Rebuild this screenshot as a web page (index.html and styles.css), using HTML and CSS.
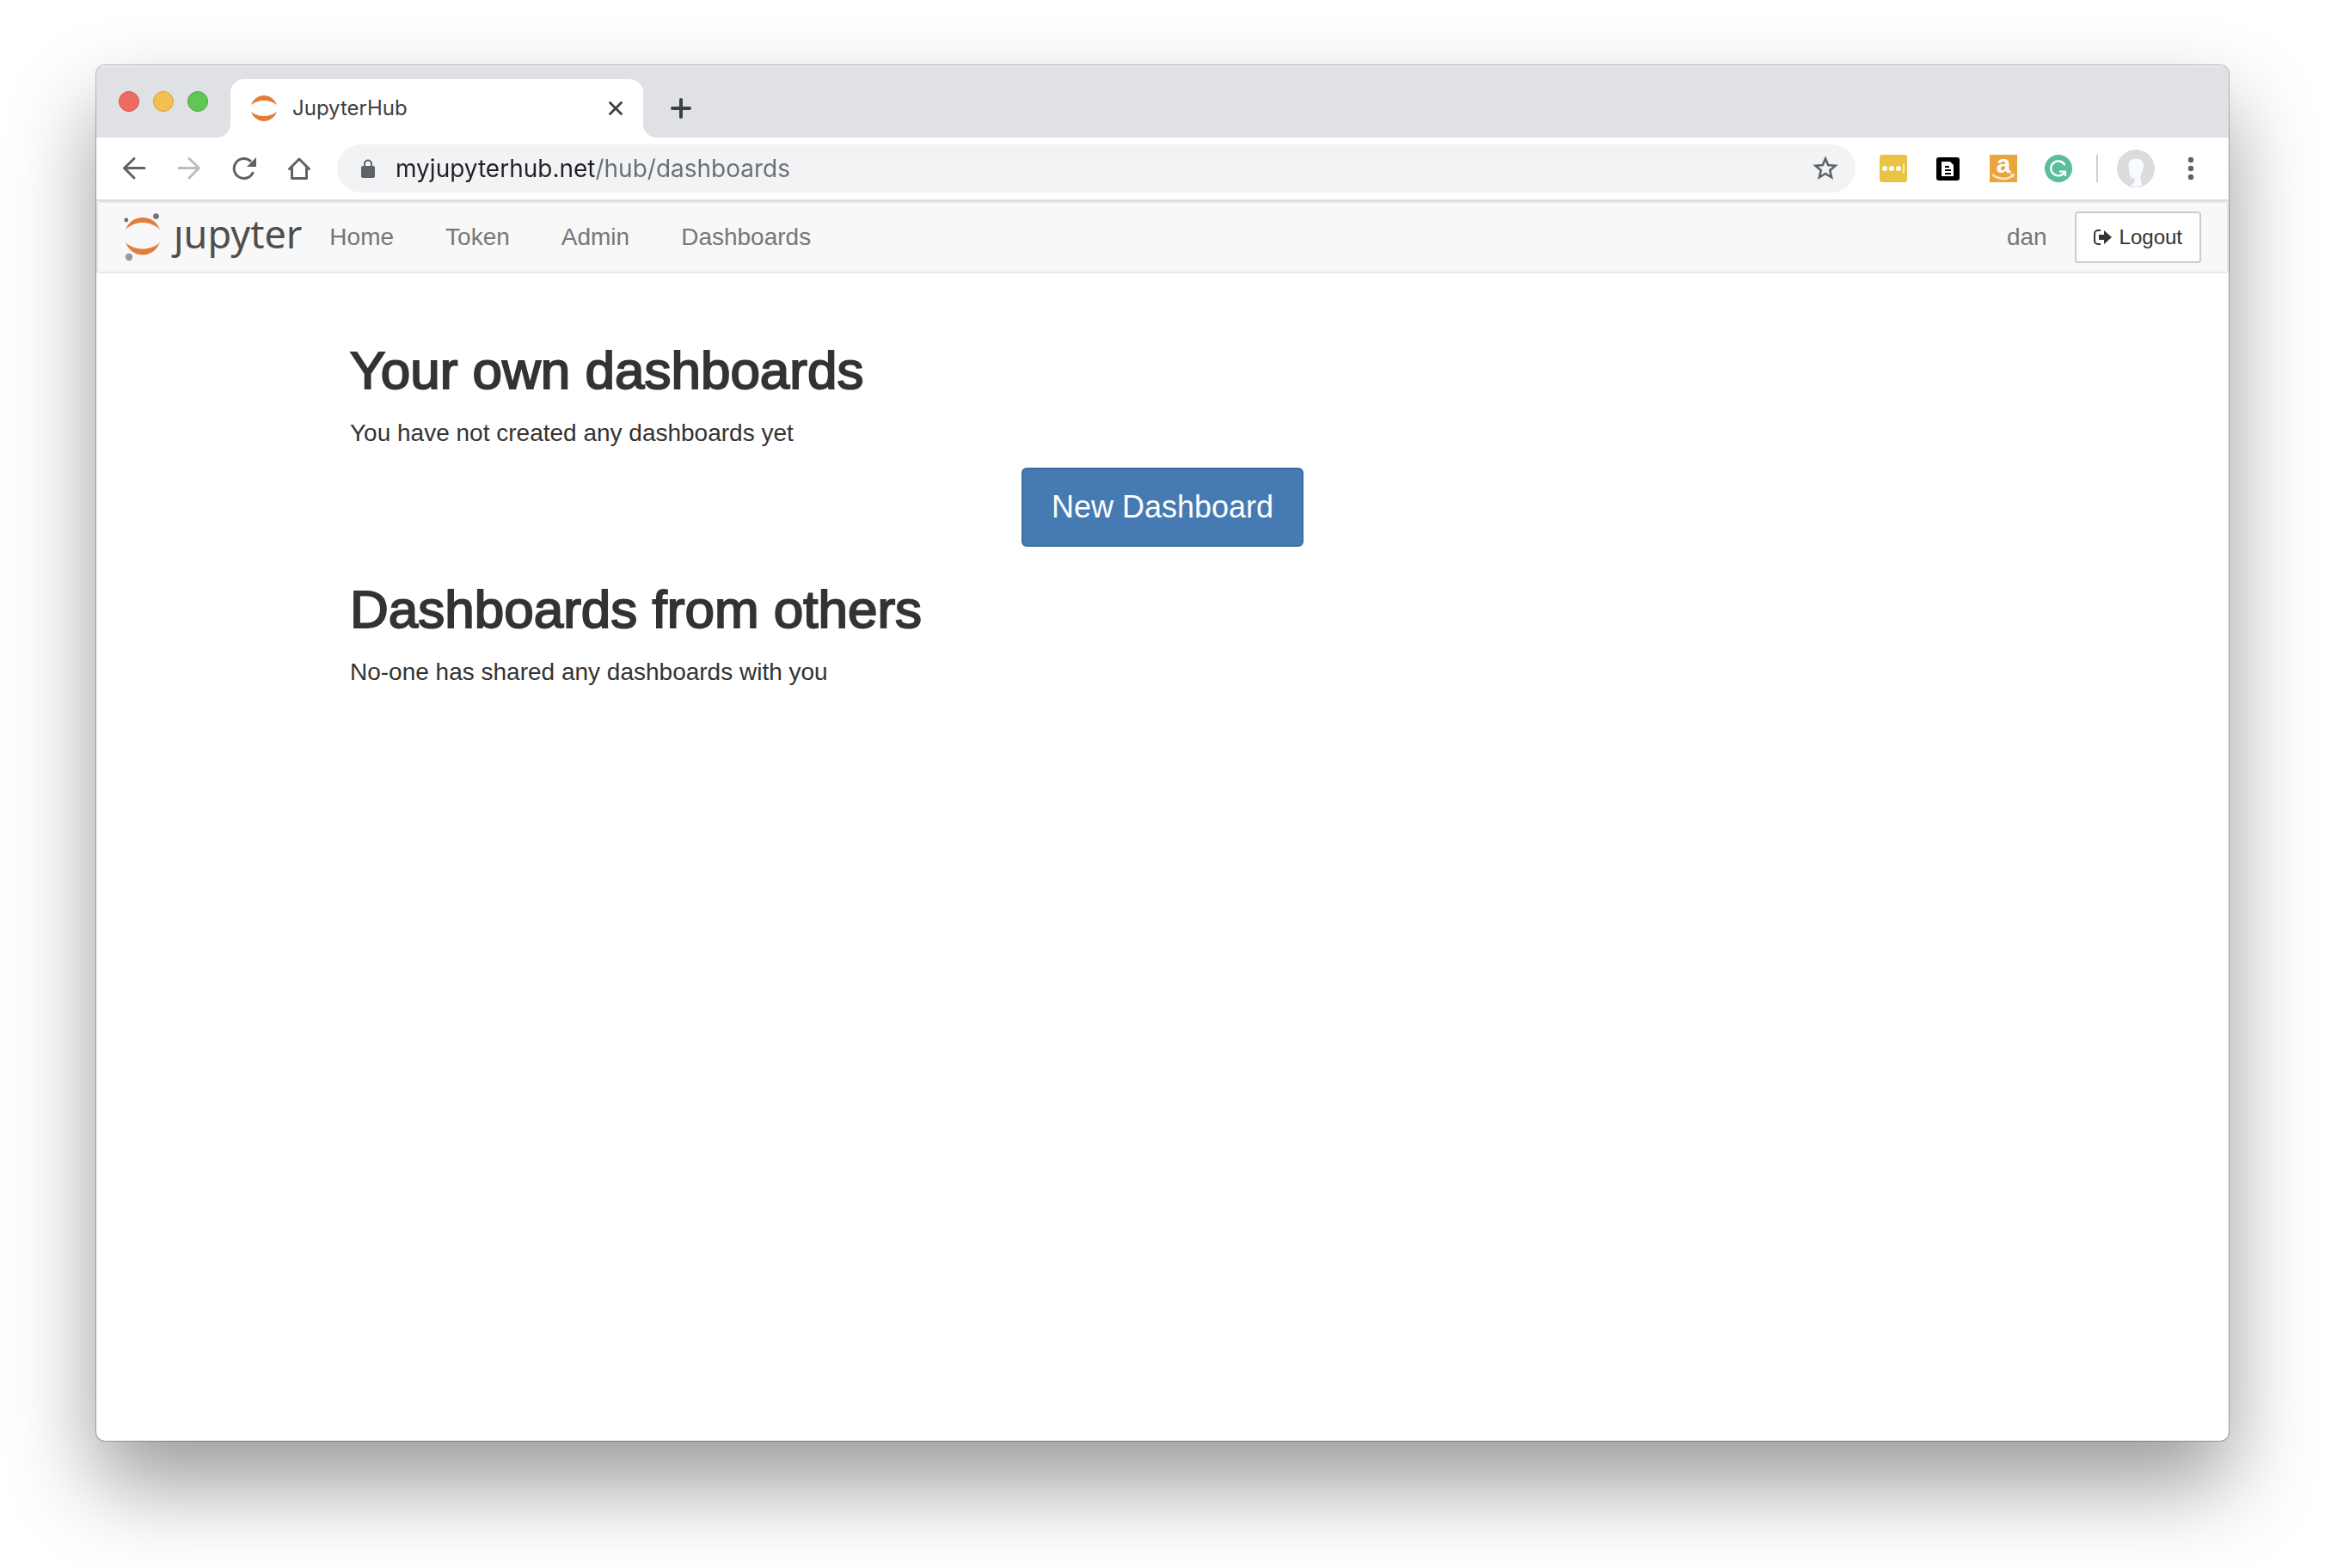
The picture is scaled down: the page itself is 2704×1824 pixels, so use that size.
FILE: index.html
```html
<!DOCTYPE html>
<html lang="en">
<head>
<meta charset="utf-8">
<title>JupyterHub</title>
<link rel="stylesheet" href="styles.css">
</head>
<body>
<div class="window">
  <header class="tabstrip">
    <div class="lights">
      <button class="light light-close" aria-label="Close window"></button>
      <button class="light light-min" aria-label="Minimise window"></button>
      <button class="light light-max" aria-label="Zoom window"></button>
    </div>
    <div class="tab">
      <svg class="favicon" viewBox="0 0 30 30" aria-hidden="true"><path fill="#e27e3c" d="M0 11C3 3.500 9 0 15 0s12 3.500 15 11C25.500 7.500 20.500 6 15 6S4.500 7.500 0 11zM0 19c3 7.500 9 11 15 11s12-3.500 15-11c-4.500 3.500-9.500 5-15 5S4.500 22.500 0 19z"/></svg>
      <span class="tab-title">JupyterHub</span>
      <button class="icon-button tab-close" aria-label="Close tab"><svg width="16" height="16" viewBox="0 0 16 16"><path d="M1.500 1.500l13 13M14.500 1.500l-13 13" stroke="#3c4043" stroke-width="2.800" stroke-linecap="round"/></svg></button>
    </div>
    <button class="icon-button new-tab" aria-label="New tab"><svg width="24" height="24" viewBox="0 0 24 24"><path d="M12 2v20M2 12h20" stroke="#3c4043" stroke-width="4" stroke-linecap="round"/></svg></button>
  </header>

  <div class="toolbar">
    <div class="nav-buttons">
      <button class="icon-button" aria-label="Back"><svg width="28" height="28" viewBox="0 0 28 28" fill="none" stroke="#5f6368" stroke-width="3" stroke-linecap="round" stroke-linejoin="round"><path d="M26 13.500H3M14 2.500l-11.500 11L14 25"/></svg></button>
      <button class="icon-button" aria-label="Forward" disabled><svg width="28" height="28" viewBox="0 0 28 28" fill="none" stroke="#babcbe" stroke-width="3" stroke-linecap="round" stroke-linejoin="round"><path d="M2 13.500h23M14 2.500l11.500 11L14 25"/></svg></button>
      <button class="icon-button" aria-label="Reload"><svg width="28" height="28" viewBox="0 0 28 28" fill="none"><path d="M24.500 18A11.500 11.500 0 1 1 22 6" stroke="#5f6368" stroke-width="3"/><path d="M28 1v11H17z" fill="#5f6368"/></svg></button>
      <button class="icon-button" aria-label="Home"><svg width="28" height="28" viewBox="0 0 28 28" fill="none" stroke="#5f6368" stroke-width="3" stroke-linecap="round" stroke-linejoin="round"><path d="M2.500 14.500L14 3l11.500 11.500M5.500 12v13.500h17V12"/></svg></button>
    </div>
    <div class="address">
      <svg width="18" height="22" viewBox="0 0 18 22" aria-hidden="true"><rect x="1" y="8" width="16" height="14" rx="2" fill="#5f6368"/><path d="M5 9V5.500a4 4 0 0 1 8 0V9" fill="none" stroke="#5f6368" stroke-width="2"/></svg>
      <input class="url" type="text" aria-label="Address" value="myjupyterhub.net/hub/dashboards">
      <button class="icon-button" aria-label="Bookmark this page"><svg width="30" height="30" viewBox="0 0 30 30"><path d="M15 3.500l3.200 7.600 8.300.7-6.300 5.400 1.900 8.100L15 21l-7.100 4.300 1.900-8.100-6.300-5.400 8.300-.7z" fill="none" stroke="#5f6368" stroke-width="2.600"/></svg></button>
    </div>
    <div class="extensions">
      <button class="icon-button" aria-label="Password manager"><svg width="32" height="32" viewBox="0 0 32 32"><rect width="32" height="32" rx="3" fill="#e8c344"/><g fill="#fff"><circle cx="6" cy="16" r="3"/><circle cx="14" cy="16" r="3"/><circle cx="22" cy="16" r="3"/></g><path d="M28 10v12" stroke="#f6e7b4" stroke-width="2"/></svg></button>
      <button class="icon-button" aria-label="Notes"><svg width="32" height="32" viewBox="0 0 32 32"><rect x="2" y="3" width="27" height="27" rx="3" fill="#000"/><path d="M8 8h10l4 4v13H8z" fill="#fff"/><path d="M12 14h5M12 18h7M12 22h7" stroke="#000" stroke-width="2"/></svg></button>
      <button class="icon-button amazon" aria-label="Shopping assistant"><span class="amazon-letter">a</span><svg width="28" height="8" viewBox="0 0 28 8"><path d="M2 1.500c7 5.500 16 6 23 1" fill="none" stroke="#fbe6c4" stroke-width="2.400" stroke-linecap="round"/><path d="M21 0h6l-1 5z" fill="#fbe6c4"/></svg></button>
      <button class="icon-button" aria-label="Writing assistant"><svg width="32" height="32" viewBox="0 0 32 32"><circle cx="16" cy="16" r="16" fill="#58be9b"/><path d="M23 11.500A8.500 8.500 0 1 0 22.500 21" fill="none" stroke="#fff" stroke-width="2.400" stroke-linecap="round"/><path d="M17 19.500h7V25" fill="none" stroke="#fff" stroke-width="2.200"/></svg></button>
      <span class="separator"></span>
      <button class="icon-button" aria-label="Profile"><svg width="44" height="44" viewBox="0 0 44 44"><circle cx="22" cy="22" r="22" fill="#dcdcdc"/><path d="M13 20c-.5-6 2-10 9-10s10 4 9.500 10c-.5 5-3 8-3.500 12 .2 4 1 7.500 3 10a22 22 0 0 1-18 0c4-1 7-3.500 7.500-7.500-4.500-.5-7-3-7.500-14.500z" fill="#f8fafc" stroke="#cfd6df"/></svg></button>
      <button class="icon-button" aria-label="Menu"><svg width="8" height="28" viewBox="0 0 8 28" fill="#5f6368"><circle cx="4" cy="4" r="3.200"/><circle cx="4" cy="14" r="3.200"/><circle cx="4" cy="24" r="3.200"/></svg></button>
    </div>
  </div>

  <nav class="navbar">
    <a class="brand" href="#">
      <svg width="44" height="56" viewBox="0 0 44 56" aria-hidden="true"><path fill="#e27e3c" d="M2 19C6 9 14 5 22 5s16 4 20 14C36 13.500 29 11 22 11S8 13.500 2 19zM2 34c4 10 12 14.500 20 14.500S38 44 42 34c-6 5.500-13 7.500-20 7.500S8 39.500 2 34z"/><circle cx="2.800" cy="8" r="2.400" fill="#6f7070"/><circle cx="37.500" cy="3.600" r="3.400" fill="#767677"/><circle cx="6" cy="51" r="4.200" fill="#979797"/></svg>
      <span class="wordmark">ȷupyter</span>
    </a>
    <a class="nav-link" href="#">Home</a>
    <a class="nav-link" href="#">Token</a>
    <a class="nav-link" href="#">Admin</a>
    <a class="nav-link" href="#">Dashboards</a>
    <span class="user">dan</span>
    <button class="logout"><svg width="22" height="20" viewBox="0 0 22 20" aria-hidden="true"><path d="M8 2H5a4 4 0 0 0-4 4v8a4 4 0 0 0 4 4h3" fill="none" stroke="#333" stroke-width="2"/><path d="M6 7h6V2l9 8-9 8v-5H6z" fill="#333"/></svg>Logout</button>
  </nav>

  <main class="container">
    <h2 class="heading">Your own dashboards</h2>
    <p class="note">You have not created any dashboards yet</p>
    <button class="primary">New Dashboard</button>
    <h2 class="heading">Dashboards from others</h2>
    <p class="note">No-one has shared any dashboards with you</p>
  </main>
</div>
</body>
</html>
```
FILE: styles.css
```css
* {
  box-sizing: border-box;
}

body {
  margin: 0;
  padding: 76px 112px 148px;
  background: #fff;
  color: #333;
  font-family: "Liberation Sans", Arial, sans-serif;
  font-size: 28px;
  line-height: 40px;
}

button {
  margin: 0;
  font-family: inherit;
}

svg {
  display: block;
  flex: none;
}

.window {
  min-height: calc(100vh - 224px);
  overflow: hidden;
  border-radius: 10px;
  background: #fff;
  box-shadow: 0 0 0 1px rgba(0, 0, 0, 0.25), 0 50px 100px rgba(0, 0, 0, 0.4);
}

.icon-button {
  display: flex;
  flex: none;
  padding: 0;
  border: 0;
  background: none;
}

/* Tab strip */

.tabstrip {
  display: flex;
  height: 84px;
  padding: 16px 26px 0;
  background: #dfe1e5;
  box-shadow: inset 0 2px 0 #e9ebee;
}

.lights {
  display: flex;
  gap: 16px;
  padding-top: 14px;
}

.light {
  width: 24px;
  height: 24px;
  padding: 0;
  border: 1px solid;
  border-radius: 50%;
}

.light-close {
  border-color: #d5544c;
  background: #ed6b60;
}

.light-min {
  border-color: #d8a03f;
  background: #f5bf50;
}

.light-max {
  border-color: #4ea73f;
  background: #62c655;
}

.tab {
  position: relative;
  display: flex;
  align-items: center;
  width: 480px;
  margin-left: 26px;
  padding: 0 24px;
  border-radius: 16px 16px 0 0;
  background: #fff;
}

.tab::before,
.tab::after {
  content: "";
  position: absolute;
  bottom: 0;
  width: 16px;
  height: 16px;
}

.tab::before {
  right: 100%;
  background: radial-gradient(circle at 0 0, transparent 16px, #fff 16px);
}

.tab::after {
  left: 100%;
  background: radial-gradient(circle at 100% 0, transparent 16px, #fff 16px);
}

.favicon {
  width: 30px;
  height: 30px;
}

.tab-title {
  flex: 1;
  margin-left: 18px;
  color: #3c4043;
  font-family: Inter, sans-serif;
  font-size: 24px;
}

.new-tab {
  align-self: center;
  margin-left: 32px;
}

/* Toolbar */

.toolbar {
  display: flex;
  align-items: center;
  height: 74px;
  padding: 0 40px 0 30px;
  border-bottom: 2px solid #dadce0;
}

.nav-buttons {
  display: flex;
  gap: 36px;
}

.address {
  display: flex;
  flex: 1;
  align-items: center;
  height: 56px;
  margin-left: 30px;
  padding: 0 20px 0 27px;
  border-radius: 28px;
  background: #f1f3f4;
}

.url {
  flex: 1;
  min-width: 0;
  margin-left: 23px;
  padding: 0;
  border: 0;
  outline: 0;
  /* The host is dark and the path after it is grey. */
  background: linear-gradient(90deg, #202124 231px, #6b6e72 231px);
  background-clip: text;
  -webkit-background-clip: text;
  -webkit-text-fill-color: transparent;
  color: #202124;
  font-family: Inter, sans-serif;
  font-size: 28px;
  line-height: 40px;
}

.extensions {
  display: flex;
  align-items: center;
  gap: 32px;
  margin-left: 28px;
}

.amazon {
  flex-direction: column;
  align-items: center;
  width: 32px;
  height: 32px;
  background: #eca43e;
}

.amazon-letter {
  height: 22px;
  color: #fff;
  font-size: 30px;
  font-weight: bold;
  line-height: 22px;
}

.separator {
  width: 2px;
  height: 32px;
  margin: 0 -10px 0 -4px;
  background: #cbcdd0;
}

.extensions > :last-child {
  margin-left: 6px;
}

/* Page navigation */

.navbar {
  display: flex;
  align-items: center;
  height: 84px;
  padding: 0 30px;
  border: 2px solid #e7e7e7;
  border-radius: 4px;
  background: #f8f8f8;
}

.brand {
  display: flex;
  align-items: center;
  gap: 14px;
  margin-right: 2px;
  color: #4e4e4e;
  text-decoration: none;
}

.wordmark {
  padding-bottom: 8px;
  font-family: "Noto Sans", sans-serif;
  font-size: 45px;
  line-height: 48px;
}

.nav-link {
  padding: 0 30px;
  color: #777;
  text-decoration: none;
}

.user {
  margin-left: auto;
  color: #777;
}

.logout {
  display: flex;
  align-items: center;
  gap: 8px;
  height: 60px;
  margin-left: 32px;
  padding: 0 20px;
  border: 2px solid #ccc;
  border-radius: 4px;
  background: #fff;
  color: #333;
  font-size: 24px;
}

/* Content */

.container {
  max-width: 1890px;
  margin: 0 auto;
  padding: 80px 0;
}

/* A thin stroke brings the regular face up to a medium weight. */
.heading {
  margin: 0;
  font-size: 62px;
  font-weight: 400;
  line-height: 66px;
  -webkit-text-stroke: 2px #333;
}

.note {
  margin: 20px 0;
}

.primary {
  display: block;
  height: 92px;
  margin: 0 auto 40px;
  padding: 0 33px;
  border: 2px solid #3d6e9f;
  border-radius: 6px;
  background: #457ab2;
  color: #fff;
  font-size: 36px;
}
```
